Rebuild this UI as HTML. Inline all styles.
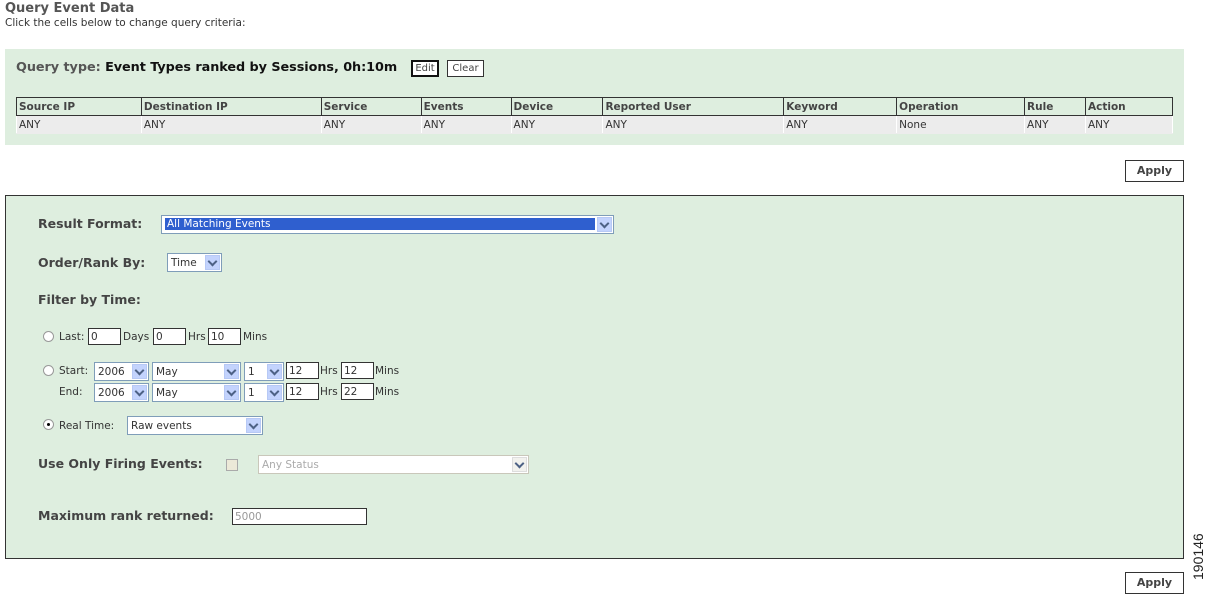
<!DOCTYPE html>
<html><head><style>
*{margin:0;padding:0;box-sizing:border-box}
body{width:1210px;height:594px;background:#fff;position:relative;font-family:"DejaVu Sans","Liberation Sans",sans-serif;color:#333;overflow:hidden}
.a{position:absolute;white-space:nowrap}
.s{font-size:10.5px;color:#333}
.b{font-size:12.5px;font-weight:bold;color:#444}
.sel{position:absolute;background:#fff;border:1px solid #7f9db9;height:19px;font-size:10.5px;padding:3px 0 0 3px;color:#333;white-space:nowrap}
.sel i{position:absolute;right:1px;top:1px;width:15px;height:15px;background:#c3d3fd;border:1px solid #b7c9f5}
.sel i:after{content:"";position:absolute;left:3px;top:2px;width:5px;height:5px;border-right:2px solid #4d6185;border-bottom:2px solid #4d6185;transform:rotate(45deg)}
.inp{position:absolute;background:#fff;border:1px solid #333;height:17px;font-size:10.5px;padding:2px 0 0 2px}
.rad{position:absolute;width:11px;height:11px;border-radius:50%;border:1px solid #999;background:#fff}
.btn{position:absolute;border:1px solid #333;background:#fff;font-size:11px;font-weight:bold;color:#444;text-align:center}
table{position:absolute;border-collapse:collapse;font-size:10.5px}
td{border:1px solid #333;padding:1px 2px;height:18px}
tr.h td{font-weight:bold;color:#444;background:#deeedf}
tr.d td{background:#ececec;border-color:#ececec #fff;border-left:1px solid #fff;padding-top:2px}
</style></head><body>
<div class="a" style="left:5px;top:1px;font-size:13px;font-weight:bold;color:#555">Query Event Data</div>
<div class="a s" style="left:5px;top:17px">Click the cells below to change query criteria:</div>

<div class="a" style="left:5px;top:49px;width:1179px;height:96px;background:#deeedf"></div>
<div class="a" style="left:16px;top:60px;font-size:12.8px;font-weight:bold;color:#555;letter-spacing:-0.05px">Query type: <span style="color:#111">Event Types ranked by Sessions, 0h:10m</span></div>
<div class="btn" style="left:411px;top:60px;width:28px;height:17px;border:2px solid #111;font-weight:normal;font-size:10px;padding-top:1px">Edit</div>
<div class="btn" style="left:447px;top:60px;width:37px;height:17px;font-weight:normal;font-size:10px;padding-top:2px">Clear</div>
<table style="left:16px;top:97px;width:1157px">
<colgroup><col style="width:125px"><col style="width:180px"><col style="width:100px"><col style="width:90px"><col style="width:92px"><col style="width:181px"><col style="width:113px"><col style="width:128px"><col style="width:61px"><col style="width:87px"></colgroup>
<tr class="h"><td>Source IP</td><td>Destination IP</td><td>Service</td><td>Events</td><td>Device</td><td>Reported User</td><td>Keyword</td><td>Operation</td><td>Rule</td><td>Action</td></tr>
<tr class="d"><td>ANY</td><td>ANY</td><td>ANY</td><td>ANY</td><td>ANY</td><td>ANY</td><td>ANY</td><td>None</td><td>ANY</td><td>ANY</td></tr>
</table>

<div class="btn" style="left:1125px;top:160px;width:59px;height:22px;padding-top:3px">Apply</div>

<div class="a" style="left:5px;top:195px;width:1179px;height:364px;background:#deeedf;border:1px solid #333"></div>
<div class="a b" style="left:38px;top:216px">Result Format:</div>
<div class="sel" style="left:161px;top:215px;width:453px;height:19px;padding-top:2px"><span style="background:#2f5fcf;color:#fff;display:block;width:430px;padding-left:2px;outline:1px dotted #fff">All Matching Events</span><i></i></div>
<div class="a b" style="left:38px;top:255px">Order/Rank By:</div>
<div class="sel" style="left:167px;top:253px;width:55px">Time<i></i></div>
<div class="a b" style="left:38px;top:292px">Filter by Time:</div>

<div class="rad" style="left:43px;top:331px"></div>
<div class="a s" style="left:59px;top:331px">Last:</div>
<div class="inp" style="left:88px;top:328px;width:33px">0</div>
<div class="a s" style="left:123px;top:331px">Days</div>
<div class="inp" style="left:153px;top:328px;width:33px">0</div>
<div class="a s" style="left:188px;top:331px">Hrs</div>
<div class="inp" style="left:208px;top:328px;width:33px">10</div>
<div class="a s" style="left:243px;top:331px">Mins</div>

<div class="rad" style="left:43px;top:365px"></div>
<div class="a s" style="left:59px;top:365px">Start:</div>
<div class="sel" style="left:94px;top:362px;width:55px">2006<i></i></div>
<div class="sel" style="left:152px;top:362px;width:89px">May<i></i></div>
<div class="sel" style="left:244px;top:362px;width:40px">1<i></i></div>
<div class="inp" style="left:286px;top:362px;width:33px">12</div>
<div class="a s" style="left:320px;top:365px">Hrs</div>
<div class="inp" style="left:341px;top:362px;width:33px">12</div>
<div class="a s" style="left:375px;top:365px">Mins</div>

<div class="a s" style="left:59px;top:386px">End:</div>
<div class="sel" style="left:94px;top:383px;width:55px">2006<i></i></div>
<div class="sel" style="left:152px;top:383px;width:89px">May<i></i></div>
<div class="sel" style="left:244px;top:383px;width:40px">1<i></i></div>
<div class="inp" style="left:286px;top:383px;width:33px">12</div>
<div class="a s" style="left:320px;top:386px">Hrs</div>
<div class="inp" style="left:341px;top:383px;width:33px">22</div>
<div class="a s" style="left:375px;top:386px">Mins</div>

<div class="rad" style="left:43px;top:419px"><div style="position:absolute;left:3px;top:3px;width:3px;height:3px;background:#000;border-radius:50%"></div></div>
<div class="a s" style="left:59px;top:420px">Real Time:</div>
<div class="sel" style="left:127px;top:416px;width:136px">Raw events<i></i></div>

<div class="a b" style="left:38px;top:456px">Use Only Firing Events:</div>
<div class="a" style="left:226px;top:459px;width:12px;height:12px;background:#ece9d8;border:1px solid #aaa"></div>
<div class="sel" style="left:258px;top:455px;width:271px;border-color:#c9c7ba;color:#aaa">Any Status<i style="background:#f2f2ee;border-color:#ddd"></i></div>

<div class="a b" style="left:38px;top:508px">Maximum rank returned:</div>
<div class="inp" style="left:232px;top:508px;width:135px;color:#999">5000</div>

<div class="btn" style="left:1125px;top:572px;width:59px;height:22px;padding-top:3px">Apply</div>
<div class="a" style="left:1190px;top:580px;font-size:14px;color:#222;font-family:'Liberation Sans',sans-serif;transform:rotate(-90deg);transform-origin:0 0">190146</div>
</body></html>
